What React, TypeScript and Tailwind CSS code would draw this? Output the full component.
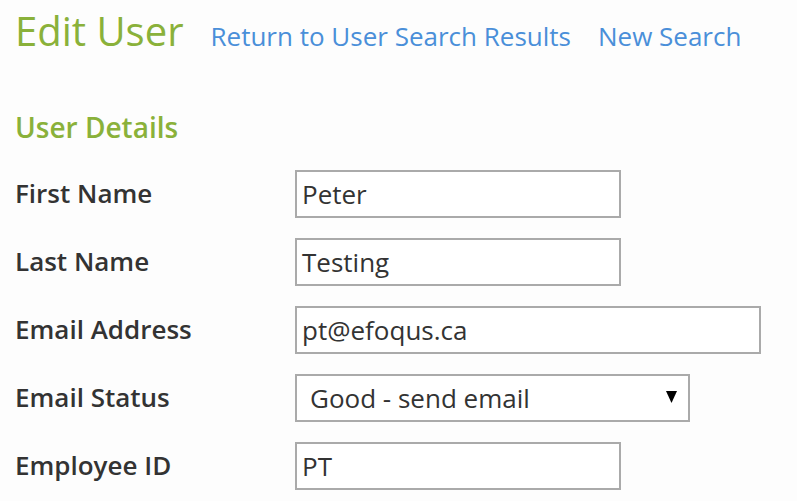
import React from "react";

const rows = [
  { label: "First Name", value: "Peter", w: "w-[326px]" },
  { label: "Last Name", value: "Testing", w: "w-[326px]" },
  { label: "Email Address", value: "pt@efoqus.ca", w: "w-[466px]" },
];

export default function App() {
  return (
    <div
      className="min-h-[501px] w-[797px] bg-[#fdfdfd] pl-[15px] text-[#333333]"
      style={{ fontFamily: '"Open Sans", sans-serif' }}
    >
      <div className="flex items-baseline pt-[4px]">
        <h1 className="text-[40px] font-normal leading-[54px] text-[#8ab13a]">Edit User</h1>
        <a className="ml-[27px] text-[26px] text-[#4a8fd9]">Return to User Search Results</a>
        <a className="ml-[27px] text-[26px] text-[#4a8fd9]">New Search</a>
      </div>
      <h2 className="mt-[50px] text-[28px] font-semibold leading-[38px] text-[#8ab13a]">User Details</h2>
      <div className="mt-[24px] flex flex-col gap-[20px]">
        {rows.map((r) => (
          <div key={r.label} className="flex items-center">
            <div className="w-[280px] text-[26px] font-semibold leading-[34px] mb-[2px]">{r.label}</div>
            <div
              className={`${r.w} h-[48px] border-2 border-[#aaaaaa] bg-white pl-[5px] text-[26px] leading-[44px]`}
            >
              {r.value}
            </div>
          </div>
        ))}
        <div className="flex items-center">
          <div className="w-[280px] text-[26px] font-semibold leading-[34px] mb-[2px]">Email Status</div>
          <div className="flex h-[48px] w-[395px] items-center justify-between border-2 border-[#aaaaaa] bg-white pl-[13px] pr-[11px] text-[26px]">
            <span>Good - send email</span>
            <svg width="11" height="12" viewBox="0 0 11 12" className="mb-[2px]">
              <polygon points="0,0 11,0 5.5,12" fill="#000" />
            </svg>
          </div>
        </div>
        <div className="flex items-center">
          <div className="w-[280px] text-[26px] font-semibold leading-[34px] mb-[2px]">Employee ID</div>
          <div className="h-[48px] w-[326px] border-2 border-[#aaaaaa] bg-white pl-[5px] text-[26px] leading-[44px]">
            PT
          </div>
        </div>
      </div>
    </div>
  );
}
